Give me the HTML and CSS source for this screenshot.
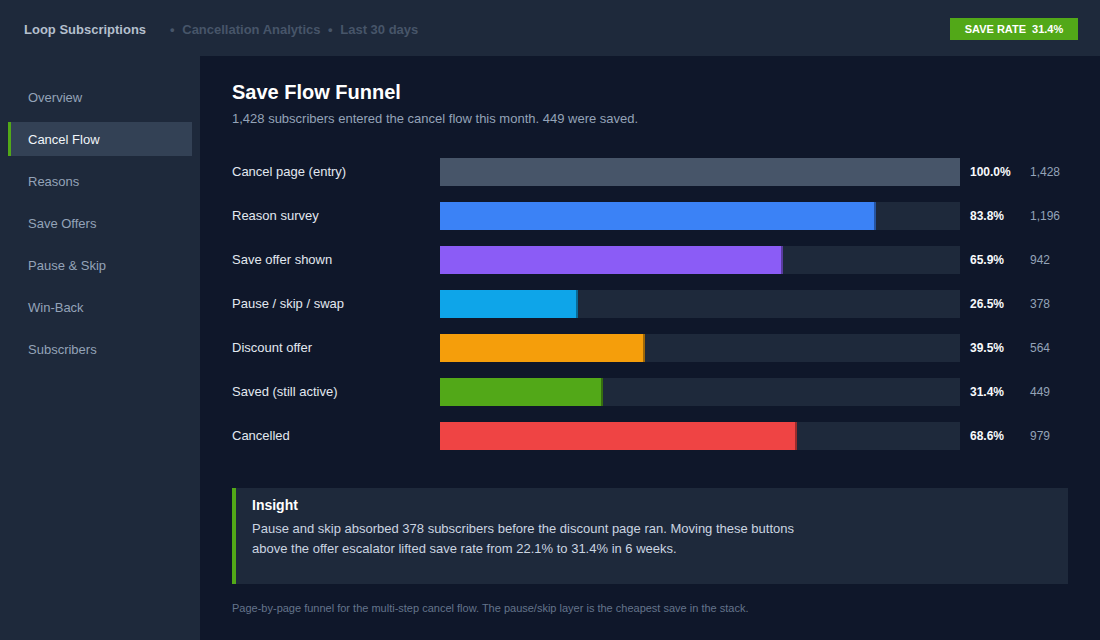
FILE: index.html
```html
<!DOCTYPE html>
<html lang="en">
<head>
    <meta charset="UTF-8">
    <title>Loop Subscriptions - Save Flow Funnel</title>
    <link rel="stylesheet" href="styles.css">
</head>
<body>
    <header class="topbar">
        <div class="brand">Loop Subscriptions</div>
        <div class="crumbs">
            <span class="dot">•</span> Cancellation Analytics <span class="dot">•</span> Last 30 days
        </div>
        <div class="badge"><span>SAVE RATE</span><span>31.4%</span></div>
    </header>

    <div class="layout">
        <nav class="sidebar">
            <a class="nav-item">Overview</a>
            <a class="nav-item active">Cancel Flow</a>
            <a class="nav-item">Reasons</a>
            <a class="nav-item">Save Offers</a>
            <a class="nav-item">Pause &amp; Skip</a>
            <a class="nav-item">Win-Back</a>
            <a class="nav-item">Subscribers</a>
        </nav>

        <main class="main">
            <h1 class="title">Save Flow Funnel</h1>
            <p class="subtitle">1,428 subscribers entered the cancel flow this month. 449 were saved.</p>

            <div class="funnel">
                <div class="row">
                    <div class="label">Cancel page (entry)</div>
                    <div class="track"><div class="fill entry" style="width: 100%"></div></div>
                    <div class="pct">100.0%</div>
                    <div class="count">1,428</div>
                </div>
                <div class="row">
                    <div class="label">Reason survey</div>
                    <div class="track"><div class="fill blue" style="width: 83.8%"></div></div>
                    <div class="pct">83.8%</div>
                    <div class="count">1,196</div>
                </div>
                <div class="row">
                    <div class="label">Save offer shown</div>
                    <div class="track"><div class="fill purple" style="width: 65.9%"></div></div>
                    <div class="pct">65.9%</div>
                    <div class="count">942</div>
                </div>
                <div class="row">
                    <div class="label">Pause / skip / swap</div>
                    <div class="track"><div class="fill sky" style="width: 26.5%"></div></div>
                    <div class="pct">26.5%</div>
                    <div class="count">378</div>
                </div>
                <div class="row">
                    <div class="label">Discount offer</div>
                    <div class="track"><div class="fill amber" style="width: 39.5%"></div></div>
                    <div class="pct">39.5%</div>
                    <div class="count">564</div>
                </div>
                <div class="row">
                    <div class="label">Saved (still active)</div>
                    <div class="track"><div class="fill green" style="width: 31.4%"></div></div>
                    <div class="pct">31.4%</div>
                    <div class="count">449</div>
                </div>
                <div class="row">
                    <div class="label">Cancelled</div>
                    <div class="track"><div class="fill red" style="width: 68.6%"></div></div>
                    <div class="pct">68.6%</div>
                    <div class="count">979</div>
                </div>
            </div>

            <div class="insight">
                <div class="insight-title">Insight</div>
                <p class="insight-text">Pause and skip absorbed 378 subscribers before the discount page ran. Moving these buttons<br>above the offer escalator lifted save rate from 22.1% to 31.4% in 6 weeks.</p>
            </div>

            <p class="footnote">Page-by-page funnel for the multi-step cancel flow. The pause/skip layer is the cheapest save in the stack.</p>
        </main>
    </div>
</body>
</html>
```

FILE: styles.css
```css
body {
    margin: 0;
    font-family: "Liberation Sans", Arial, sans-serif;
    background: #0f172a;
    color: #e2e8f0;
    height: 100vh;
    overflow: hidden;
    display: flex;
    flex-direction: column;
}

/* top bar */
.topbar {
    height: 56px;
    flex-shrink: 0;
    box-sizing: border-box;
    background: #1e293b;
    display: flex;
    align-items: center;
    padding: 2px 22px 0 24px;
    font-size: 13px;
    font-weight: bold;
}

.brand {
    color: #b4bfcd;
}

.crumbs {
    color: #475569;
    margin-left: 24px;
    flex: 1;
}

.crumbs .dot {
    margin: 0 4px;
}

.crumbs .dot:first-child {
    margin-left: 0;
}

.badge {
    background: #52a818;
    color: #fff;
    font-size: 11px;
    height: 22px;
    width: 128px;
    display: flex;
    align-items: center;
    justify-content: center;
    gap: 6px;
}

/* layout */
.layout {
    flex: 1;
    display: flex;
}

.sidebar {
    width: 200px;
    flex-shrink: 0;
    background: #1e293b;
    padding: 24px 8px;
    box-sizing: border-box;
    display: flex;
    flex-direction: column;
    gap: 8px;
}

.nav-item {
    height: 34px;
    display: flex;
    align-items: center;
    padding-left: 17px;
    border-left: 3px solid transparent;
    font-size: 13px;
    color: #94a3b8;
}

.nav-item.active {
    background: #334155;
    border-left-color: #52a818;
    color: #f1f5f9;
}

.main {
    flex: 1;
    padding: 24px 32px 0 32px;
}

.title {
    margin: 0;
    font-size: 20px;
    line-height: 24px;
    color: #fff;
}

.subtitle {
    margin: 6px 0 0;
    font-size: 13px;
    line-height: 18px;
    color: #94a3b8;
}

/* funnel */
.funnel {
    margin-top: 30px;
    display: flex;
    flex-direction: column;
    gap: 16px;
}

.row {
    display: flex;
    align-items: center;
    height: 28px;
}

.label {
    width: 208px;
    font-size: 13px;
    line-height: 16px;
    margin-top: -1px;
    color: #e2e8f0;
}

.track {
    width: 520px;
    height: 28px;
    background: #1e293b;
}

.fill {
    height: 100%;
    box-shadow: inset -2px 0 0 rgba(0, 0, 0, 0.35);
}

.fill.entry { background: #475569; box-shadow: none; }
.fill.blue { background: #3b82f6; }
.fill.purple { background: #8b5cf6; }
.fill.sky { background: #0ea5e9; }
.fill.amber { background: #f59e0b; }
.fill.green { background: #52a818; }
.fill.red { background: #ef4444; }

.pct {
    width: 60px;
    padding-left: 10px;
    font-size: 12px;
    font-weight: bold;
    color: #f8fafc;
}

.count {
    font-size: 12px;
    color: #94a3b8;
}

/* insight */
.insight {
    margin-top: 38px;
    width: 836px;
    box-sizing: border-box;
    background: #1e293b;
    border-left: 4px solid #52a818;
    padding: 8px 16px 25px;
}

.insight-title {
    font-size: 14px;
    line-height: 18px;
    font-weight: bold;
    color: #fff;
}

.insight-text {
    margin: 5px 0 0;
    font-size: 13px;
    line-height: 20px;
    color: #cbd5e1;
}

.footnote {
    margin: 17px 0 0;
    font-size: 11px;
    line-height: 14px;
    color: #64748b;
}
```
